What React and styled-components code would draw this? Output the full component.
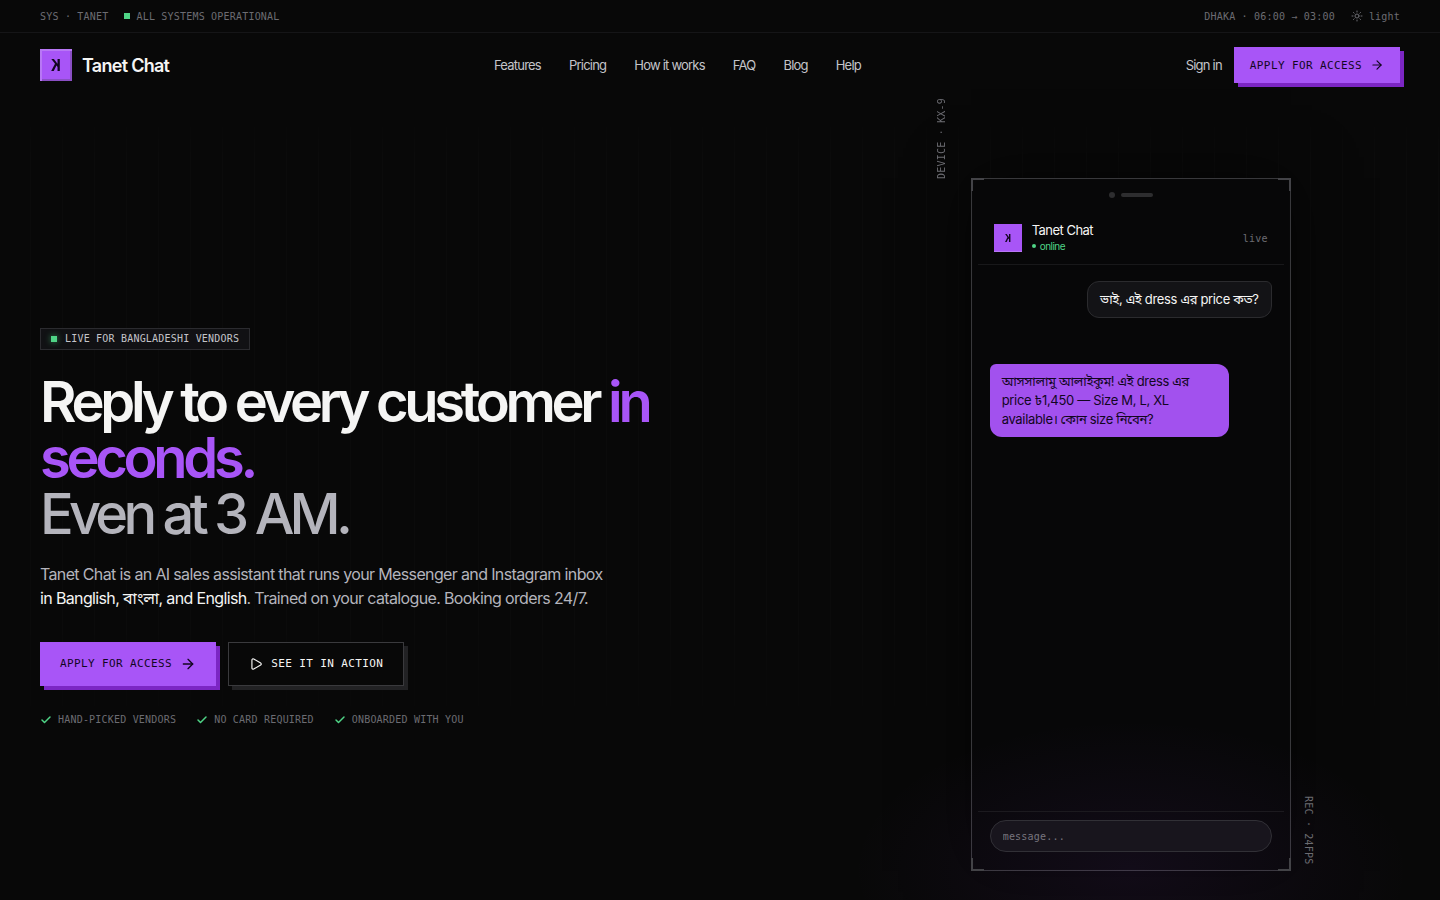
import React from 'react';
import styled, { createGlobalStyle } from 'styled-components';
import { ArrowRight, Check, Play, Sun } from 'lucide-react';

const GlobalStyle = createGlobalStyle`
  * {
    box-sizing: border-box;
  }
  body {
    margin: 0;
    background-color: #080808;
    color: #f5f5f4;
    font-family: Inter, 'Noto Sans Bengali', 'Noto Sans', sans-serif;
    font-size: 13px;
  }
  a {
    color: inherit;
    text-decoration: none;
  }
`;

const mono = `
  font-family: 'DejaVu Sans Mono', 'Liberation Mono', monospace;
  letter-spacing: 0.02em;
`;

const Page = styled.div`
  position: relative;
  min-height: 100vh;
  overflow: hidden;
`;

const TopBar = styled.div`
  ${mono}
  display: flex;
  justify-content: space-between;
  align-items: center;
  height: 33px;
  padding: 0 40px;
  border-bottom: 1px solid #151517;
  font-size: 10px;
  color: #6c6c72;
`;

const TopGroup = styled.div`
  display: flex;
  align-items: center;
  gap: 16px;
`;

const Status = styled.span`
  display: flex;
  align-items: center;
  gap: 6px;
`;

const Square = styled.span`
  width: 6px;
  height: 6px;
  background-color: #4fd486;
  box-shadow: ${props => props.$glow ? '0 0 6px rgba(74, 222, 128, 0.6)' : 'none'};
`;

const ThemeButton = styled.button`
  ${mono}
  display: flex;
  align-items: center;
  gap: 6px;
  padding: 0;
  border: 0;
  background: none;
  color: inherit;
  font-size: 10px;
  cursor: pointer;
`;

const NavBar = styled.header`
  display: flex;
  justify-content: space-between;
  align-items: center;
  height: 64px;
  padding: 0 40px;
`;

const Brand = styled.a`
  display: flex;
  align-items: center;
  gap: 10px;
  font-size: 18px;
  font-weight: 600;
  letter-spacing: -0.04em;
`;

const Mark = styled.span`
  display: flex;
  align-items: center;
  justify-content: center;
  width: ${props => props.$small ? '28px' : '32px'};
  height: ${props => props.$small ? '28px' : '32px'};
  background-color: #a855f7;
  box-shadow: ${props => props.$small
    ? 'inset 0 -1px 0 #b877f5'
    : 'inset 2px 2px 0 #b877f5, inset -2px -2px 0 #8a4fc4'};
  color: #12061f;
  font-family: 'DejaVu Sans Mono', monospace;
  font-size: ${props => props.$small ? '10px' : '16px'};
  font-weight: 700;
  letter-spacing: 0;
`;

const Mirrored = styled.span`
  display: inline-block;
  transform: scaleX(-1);
`;

const Links = styled.nav`
  display: flex;
  gap: 28px;
  color: #c4c4c9;
  letter-spacing: -0.06em;
`;

const Actions = styled.div`
  display: flex;
  align-items: center;
  gap: 12px;
  color: #c4c4c9;
  letter-spacing: -0.06em;
`;

const Button = styled.button`
  font-family: 'DejaVu Sans Mono', 'Liberation Mono', monospace;
  font-size: 11px;
  letter-spacing: 0.035em;
  display: flex;
  align-items: center;
  gap: 8px;
  height: ${props => props.$large ? '44px' : '36px'};
  padding: 0 ${props => props.$large ? '20px' : '16px'};
  border: ${props => props.$ghost ? '1px solid #3a3a3d' : '0'};
  background-color: ${props => props.$ghost ? '#080808' : '#a855f7'};
  box-shadow: 4px 4px 0 ${props => props.$ghost ? '#222224' : '#7c26c4'};
  color: ${props => props.$ghost ? '#f5f5f4' : '#12061f'};
  white-space: nowrap;
  cursor: pointer;
`;

const GridLines = styled.div`
  position: absolute;
  top: 98px;
  bottom: 0;
  left: 0;
  right: 0;
  background-image: linear-gradient(to right, rgba(255, 255, 255, 0.015) 1px, transparent 1px);
  background-size: 32px 32px;
  background-position: 30px 0;
  -webkit-mask-image: linear-gradient(transparent 10px, #000 60px, #000 520px, transparent 660px);
  mask-image: linear-gradient(transparent 10px, #000 60px, #000 520px, transparent 660px);
  pointer-events: none;
`;

const Hero = styled.main`
  position: relative;
  display: grid;
  grid-template-columns: repeat(12, minmax(0, 1fr));
  column-gap: 48px;
  align-items: center;
  padding: 81px 40px 22px;
`;

const Copy = styled.section`
  grid-column: span 7;
`;

const Eyebrow = styled.div`
  ${mono}
  display: inline-flex;
  align-items: center;
  gap: 8px;
  height: 22px;
  padding: 0 10px;
  border: 1px solid #2b2b2f;
  background-color: #111114;
  font-size: 10px;
  color: #c4c4c9;
`;

const Title = styled.h1`
  margin: 24px 0 20px;
  font-size: 56px;
  font-weight: 600;
  line-height: 56px;
  letter-spacing: -0.077em;
`;

const Accent = styled.span`
  color: #a855f7;
`;

const Muted = styled.span`
  color: #b4b4bc;
  font-weight: 500;
  letter-spacing: -0.085em;
`;

const Lead = styled.p`
  max-width: 564px;
  margin: 0 0 32px;
  font-size: 16px;
  line-height: 24px;
  letter-spacing: -0.04em;
  color: #b4b4bc;
`;

const Strong = styled.span`
  color: #f5f5f4;
`;

const ButtonRow = styled.div`
  display: flex;
  gap: 12px;
`;

const Perks = styled.ul`
  ${mono}
  display: flex;
  gap: 20px;
  margin: 28px 0 0;
  padding: 0;
  list-style: none;
  font-size: 10px;
  line-height: 12px;
  color: #6c6c72;
`;

const Perk = styled.li`
  display: flex;
  align-items: center;
  gap: 6px;
`;

const DeviceColumn = styled.section`
  grid-column: span 5;
  display: flex;
  justify-content: center;
  padding-bottom: 4px;
`;

const Device = styled.div`
  position: relative;
  display: flex;
  flex-direction: column;
  width: 320px;
  aspect-ratio: 320 / 693;
  padding: 6px;
  border: 1px solid #38383b;
  background-color: #070708;
  box-shadow: 0 0 60px rgba(0, 0, 0, 0.6), inset 0 0 10px rgba(255, 255, 255, 0.02);
`;

const Glow = styled.div`
  position: absolute;
  left: -120px;
  right: -120px;
  bottom: -150px;
  height: 300px;
  background: radial-gradient(closest-side, rgba(150, 70, 220, 0.08), transparent);
  pointer-events: none;
`;

const Corner = styled.span`
  position: absolute;
  width: 13px;
  height: 13px;
  border: 0 solid #434347;
  ${props => props.$v}: -1px;
  ${props => props.$h}: -1px;
  border-${props => props.$v}-width: 2px;
  border-${props => props.$h}-width: 2px;
`;

const SideLabel = styled.span`
  ${mono}
  position: absolute;
  writing-mode: vertical-rl;
  font-size: 10px;
  line-height: 12px;
  color: #6c6c72;
  white-space: nowrap;
  ${props => props.$left
    ? 'right: 100%; bottom: 100%; margin-right: 24px; transform: rotate(180deg);'
    : 'left: 100%; bottom: 6px; margin-left: 12px;'}
`;

const Speaker = styled.div`
  display: flex;
  justify-content: center;
  align-items: center;
  gap: 6px;
  height: 20px;
`;

const SpeakerDot = styled.span`
  width: 6px;
  height: 6px;
  border-radius: 3px;
  background-color: #2d2d2f;
`;

const SpeakerBar = styled.span`
  width: 32px;
  height: 4px;
  border-radius: 2px;
  background-color: #2d2d2f;
`;

const ChatHeader = styled.div`
  display: flex;
  align-items: center;
  gap: 10px;
  margin-top: 4px;
  padding: 13px 16px 10px;
  border-bottom: 1px solid #18181a;
`;

const ChatName = styled.div`
  flex: 1;
  line-height: 16px;
  letter-spacing: -0.04em;
`;

const Online = styled.div`
  display: flex;
  align-items: center;
  gap: 4px;
  font-size: 10px;
  line-height: 16px;
  color: #4fd486;

  &::before {
    content: '';
    width: 4px;
    height: 4px;
    border-radius: 2px;
    background-color: #4fd486;
  }
`;

const Live = styled.span`
  ${mono}
  font-size: 10px;
  color: #6c6c72;
`;

const Messages = styled.div`
  flex: 1;
  display: flex;
  flex-direction: column;
  align-items: flex-start;
  gap: 46px;
  padding: 16px 12px;
`;

const Bubble = styled.div`
  max-width: 85%;
  padding: 8px 12px;
  border: ${props => props.$mine ? '1px solid #2b2b2e' : '0'};
  border-radius: ${props => props.$mine ? '12px 6px 12px 12px' : '6px 12px 12px 12px'};
  align-self: ${props => props.$mine ? 'flex-end' : 'flex-start'};
  background-color: ${props => props.$mine ? '#131316' : '#a251ee'};
  color: ${props => props.$mine ? '#f5f5f4' : '#12061f'};
  line-height: 19px;
  letter-spacing: -0.025em;
`;

const Composer = styled.div`
  position: relative;
  padding: 8px 12px 12px;
  border-top: 1px solid #1c1a1f;
`;

const ComposerInput = styled.input`
  ${mono}
  display: block;
  width: 100%;
  height: 32px;
  padding: 0 12px;
  border: 1px solid #313036;
  border-radius: 16px;
  background-color: #18151d;
  font-size: 10px;
  color: #f5f5f4;

  &::placeholder {
    color: #77747d;
    opacity: 1;
  }
`;

const links = ['Features', 'Pricing', 'How it works', 'FAQ', 'Blog', 'Help'];
const perks = ['HAND-PICKED VENDORS', 'NO CARD REQUIRED', 'ONBOARDED WITH YOU'];

const Phone = () => (
  <Device>
    <Glow />
    <Corner $v="top" $h="left" />
    <Corner $v="top" $h="right" />
    <Corner $v="bottom" $h="left" />
    <Corner $v="bottom" $h="right" />
    <SideLabel $left>DEVICE · KX-9</SideLabel>
    <SideLabel>REC · 24FPS</SideLabel>
    <Speaker>
      <SpeakerDot />
      <SpeakerBar />
    </Speaker>
    <ChatHeader>
      <Mark $small><Mirrored>K</Mirrored></Mark>
      <ChatName>
        Tanet Chat
        <Online>online</Online>
      </ChatName>
      <Live>live</Live>
    </ChatHeader>
    <Messages>
      <Bubble $mine>ভাই, এই dress এর price কত?</Bubble>
      <Bubble>আসসালামু আলাইকুম! এই dress এর price ৳1,450 — Size M, L, XL available। কোন size নিবেন?</Bubble>
    </Messages>
    <Composer>
      <ComposerInput type="text" aria-label="Message" placeholder="message..." />
    </Composer>
  </Device>
);

const App = () => (
  <React.Fragment>
    <GlobalStyle />
    <Page>
      <GridLines />
      <TopBar>
        <TopGroup>
          <span>SYS · TANET</span>
          <Status><Square />ALL SYSTEMS OPERATIONAL</Status>
        </TopGroup>
        <TopGroup>
          <span>DHAKA · 06:00 → 03:00</span>
          <ThemeButton type="button"><Sun size={12} />light</ThemeButton>
        </TopGroup>
      </TopBar>
      <NavBar>
        <Brand href="#">
          <Mark><Mirrored>K</Mirrored></Mark>
          Tanet Chat
        </Brand>
        <Links>
          {links.map(link => <a key={link} href="#">{link}</a>)}
        </Links>
        <Actions>
          <a href="#">Sign in</a>
          <Button type="button">APPLY FOR ACCESS<ArrowRight size={14} /></Button>
        </Actions>
      </NavBar>
      <Hero>
        <Copy>
          <Eyebrow><Square $glow />LIVE FOR BANGLADESHI VENDORS</Eyebrow>
          <Title>
            Reply to every customer <Accent>in seconds.</Accent>
            <br />
            <Muted>Even at 3 AM.</Muted>
          </Title>
          <Lead>
            Tanet Chat is an AI sales assistant that runs your Messenger and Instagram inbox{' '}
            <Strong>in Banglish, বাংলা, and English</Strong>. Trained on your catalogue. Booking orders 24/7.
          </Lead>
          <ButtonRow>
            <Button type="button" $large>APPLY FOR ACCESS<ArrowRight size={16} /></Button>
            <Button type="button" $large $ghost><Play size={14} />SEE IT IN ACTION</Button>
          </ButtonRow>
          <Perks>
            {perks.map(perk => (
              <Perk key={perk}><Check size={12} color="#4fd486" strokeWidth={3} />{perk}</Perk>
            ))}
          </Perks>
        </Copy>
        <DeviceColumn>
          <Phone />
        </DeviceColumn>
      </Hero>
    </Page>
  </React.Fragment>
);

export default App;
